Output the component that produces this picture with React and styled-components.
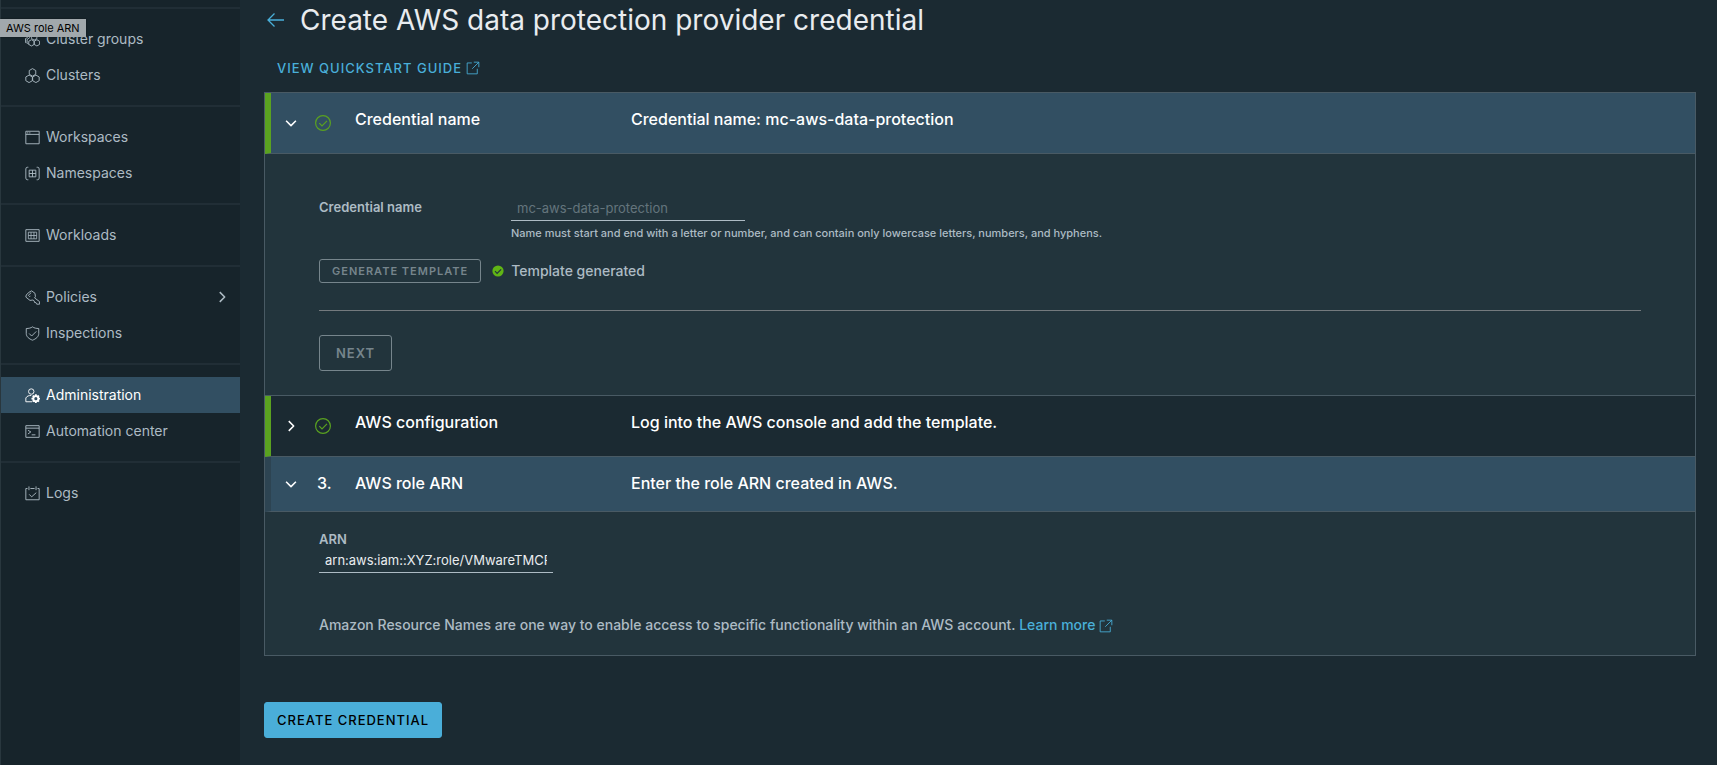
import React from 'react';
import styled, { createGlobalStyle } from 'styled-components';

const GlobalStyle = createGlobalStyle`
  *, *::before, *::after { box-sizing: border-box; }
  body {
    margin: 0;
    background: #1b2a32;
    color: #adbbc4;
    font: 400 14px/24px Inter, "Open Sans", sans-serif;
  }
  h1, h2, p { margin: 0; }
  a { color: #49afd9; text-decoration: none; }
  button, input { font-family: inherit; }
`;

const Shell = styled.div`
  position: relative;
  display: flex;
  min-height: 100vh;
`;

const DragLabel = styled.div`
  position: absolute;
  top: 19px;
  left: 0;
  padding: 0 6px;
  background: #a1a8ac;
  color: #000;
  font-size: 11px;
  line-height: 18px;
  box-shadow: 0 0 2px rgba(0, 0, 0, 0.4);
`;

const Sidebar = styled.nav`
  flex: 0 0 240px;
  padding-top: 7px;
  background: #17242b;
  border-left: 1px solid #29373e;
`;

const NavGroup = styled.ul`
  margin: 0;
  padding: 12px 0;
  list-style: none;
  border-top: 2px solid #212e36;
`;

const NavLink = styled.a`
  display: flex;
  align-items: center;
  gap: 6px;
  height: 36px;
  padding: 0 10px 0 24px;
  color: ${(p) => (p.$active ? '#fff' : '#adbbc4')};
  background: ${(p) => (p.$active ? '#324f62' : 'transparent')};
`;

const NavText = styled.span`
  flex: 1;
`;

const Main = styled.main`
  flex: 1;
  min-width: 0;
  padding: 4px 21px 27px 24px;
`;

const TitleRow = styled.header`
  display: flex;
  align-items: center;
  gap: 16px;
  padding-left: 3px;
`;

const BackLink = styled.a`
  display: flex;
`;

const Title = styled.h1`
  color: #e9ecef;
  font-size: 28px;
  font-weight: 400;
  line-height: 32px;
`;

const GuideLink = styled.a`
  display: flex;
  align-items: center;
  gap: 4px;
  width: fit-content;
  margin: 20px 0 12px;
  padding-left: 13px;
  font-size: 13px;
  font-weight: 500;
  letter-spacing: 1px;
`;

const Accordion = styled.div`
  border: 1px solid #495a64;
  background: #22343c;
`;

const StepHeader = styled.button`
  display: grid;
  grid-template-columns: 32px 40px 276px 1fr;
  align-items: center;
  width: 100%;
  height: ${(p) => (p.$done ? 61 : 55)}px;
  padding: 0 0 0 12px;
  border: 0;
  border-left: 6px solid ${(p) => (p.$done ? '#5aa220' : '#2d4452')};
  border-bottom: 1px solid #495a64;
  background: ${(p) => (p.$open ? '#324f62' : '#1b2a32')};
  color: #fff;
  font-size: 16px;
  font-weight: 500;
  line-height: 24px;
  text-align: left;
`;

const StepText = styled.span`
  padding-bottom: ${(p) => (p.$done ? 8 : 2)}px;
`;

const StepMark = styled.span`
  display: flex;
`;

const StepNumber = styled.span`
  padding: 0 0 2px 2px;
`;

const StepPanel = styled.section`
  padding: ${(p) => p.$top}px 54px ${(p) => p.$bottom}px;
  border-bottom: ${(p) => (p.$last ? 0 : 1)}px solid #495a64;
`;

const FieldRow = styled.div`
  display: grid;
  grid-template-columns: 192px 1fr;
`;

const FieldLabel = styled.label`
  display: block;
  font-size: 13px;
  font-weight: 600;
  line-height: 20px;
`;

const TextInput = styled.input`
  display: block;
  width: 234px;
  height: 24px;
  padding: 0 6px 2px;
  border: 0;
  border-bottom: 1px solid #adbbc4;
  border-radius: 0;
  outline: 0;
  background: transparent;
  color: #e9ecef;
  font-size: 13px;
  &:disabled { color: #64747c; }
`;

const Helper = styled.p`
  margin-top: 4px;
  font-size: 11px;
  font-weight: 500;
  line-height: 16px;
`;

const TemplateRow = styled.div`
  display: flex;
  align-items: center;
  margin: 18px 0 27px;
`;

const TemplateStatus = styled.p`
  display: flex;
  align-items: center;
  gap: 7px;
  margin-left: 11px;
  font-weight: 500;
`;

const Button = styled.button`
  display: block;
  height: ${(p) => (p.$small ? 24 : 36)}px;
  padding: 0 ${(p) => (p.$wide ? 16 : 12)}px;
  border: 1px solid ${(p) => (p.$primary ? '#4aaed9' : '#76858c')};
  border-radius: 3px;
  background: ${(p) => (p.$primary ? '#4aaed9' : 'transparent')};
  color: ${(p) => (p.$primary ? '#000' : '#76858c')};
  font-size: ${(p) => (p.$small ? 11 : 13)}px;
  font-weight: ${(p) => (p.$primary ? 500 : 600)};
  letter-spacing: 1px;
`;

const Divider = styled.hr`
  height: 1px;
  margin: 0 0 24px;
  border: 0;
  background: #747a7e;
`;

const ArnNote = styled.p`
  margin-top: 40px;
  font-weight: 500;
`;

const LearnLink = styled.a`
  & > svg { vertical-align: -3px; }
`;

const Footer = styled.footer`
  margin-top: 46px;
`;

/* Line icons on a 36-unit grid */
const Icon = ({ size = 16, stroke = 2.2, children }) => (
  <svg width={size} height={size} viewBox="0 0 36 36" fill="none" stroke="currentColor"
    strokeWidth={stroke} strokeLinejoin="round" aria-hidden="true">
    {children}
  </svg>
);

/* Hexagon with a point at the top */
const hex = (x, y, r) =>
  `M${x} ${y - r}l${r * 0.87} ${r * 0.5}v${r}l${-r * 0.87} ${r * 0.5}l${-r * 0.87} ${-r * 0.5}v${-r}z`;

const icons = {
  groups: (
    <>
      <path d={hex(22, 12, 7.5)} />
      <path d={hex(15.5, 26, 7.5)} />
      <path d={hex(28.5, 26, 7.5)} />
      <path d="M18 2l-7 4v8l-6 4v8l4 4M12 2L6 5v8l-5 3v8l2 3" />
    </>
  ),
  clusters: (
    <>
      <path d={hex(18, 10.5, 9)} />
      <path d={hex(9.8, 26, 9)} />
      <path d={hex(26.2, 26, 9)} />
    </>
  ),
  workspaces: (
    <>
      <path d="M2 3h32v30H2zM2 10.500h32" />
      <path d="M5 7h3M10 7h3" />
    </>
  ),
  namespaces: (
    <>
      <path d="M8 3H6Q2 3 2 7v22q0 4 4 4h2M28 3h2q4 0 4 4v22q0 4-4 4h-2" />
      <path d="M10 10h16v16H10zM18 10v16M10 18h16" />
    </>
  ),
  workloads: (
    <>
      <path d="M2 4h32v28H2z" />
      <path d="M8 10h20v16H8zM14.500 10v16M21.500 10v16M8 18h20" strokeWidth="2" />
    </>
  ),
  policies: (
    <>
      <path d="M10 5l6-3 8 6 1 8-2 3 12 9v6h-7l-2-4h-3l-1-4-3-2-7 1-10-8 1-5z" />
      <path d="M7 14l8-8M10 17l3-3" />
    </>
  ),
  inspections: (
    <>
      <path d="M18 2c4 3 9 4 15 4v12c0 8-7 13-15 16C10 31 3 26 3 18V6c6 0 11-1 15-4z" />
      <path d="M10 18l6 6 11-11" />
    </>
  ),
  administration: (
    <>
      <circle cx="15" cy="8.500" r="6.500" />
      <path d="M17 33H2v-9c3-5 7-6 13-6" />
      <path d="M26 15v5M26 31v5M15.500 25.500h5M31.500 25.500h5M18.600 18.100l3.500 3.500M29.900 29.400l3.500 3.500M33.400 18.100l-3.500 3.500M22.100 29.400l-3.500 3.500" strokeWidth="4.500" />
      <circle cx="26" cy="25.500" r="6" strokeWidth="4.500" />
    </>
  ),
  automation: (
    <>
      <path d="M2 4h32v28H2zM2 10h32" />
      <path d="M7 15l7 4-7 5M16 26h9" />
    </>
  ),
  logs: (
    <>
      <path d="M6 6H2v27h32V6h-4M13 6h10M9.500 1v9M26.500 1v9" />
      <path d="M10 20l6 6 11-10" />
    </>
  ),
};

const ExternalIcon = () => (
  <Icon size={14}>
    <path d="M15 5H3v28h26V20M20 3h13v13M33 3L16 20" />
  </Icon>
);

const Chevron = ({ down }) => (
  <Icon stroke={3.5}>
    <path d={down ? 'M7 13l11 11 11-11' : 'M13 7l11 11-11 11'} />
  </Icon>
);

const DoneIcon = () => (
  <svg width="16" height="16" viewBox="0 0 16 16" fill="none" stroke="#5aa220" strokeWidth="1.2" aria-hidden="true">
    <circle cx="8" cy="8" r="7.400" />
    <path d="M4.300 8.200l2.700 2.700 5-5" />
  </svg>
);

const navGroups = [
  [['groups', 'Cluster groups'], ['clusters', 'Clusters']],
  [['workspaces', 'Workspaces'], ['namespaces', 'Namespaces']],
  [['workloads', 'Workloads']],
  [['policies', 'Policies', true], ['inspections', 'Inspections']],
  [['administration', 'Administration'], ['automation', 'Automation center']],
  [['logs', 'Logs']],
];

const Step = ({ open = false, done, number, title, description }) => (
  <StepHeader type="button" $open={open} $done={done} aria-expanded={open}>
    <StepMark><Chevron down={open} /></StepMark>
    {done ? <StepMark><DoneIcon /></StepMark> : <StepNumber>{number}</StepNumber>}
    <StepText $done={done}>{title}</StepText>
    <StepText $done={done}>{description}</StepText>
  </StepHeader>
);

export default function App() {
  return (
    <>
      <GlobalStyle />
      <Shell>
        <Sidebar aria-label="Primary">
          {navGroups.map((group) => (
            <NavGroup key={group[0][0]}>
              {group.map(([icon, label, expandable]) => (
                <li key={icon}>
                  <NavLink href="#" $active={icon === 'administration'}>
                    <Icon size={15}>{icons[icon]}</Icon>
                    <NavText>{label}</NavText>
                    {expandable && <Chevron />}
                  </NavLink>
                </li>
              ))}
            </NavGroup>
          ))}
        </Sidebar>
        <Main>
          <TitleRow>
            <BackLink href="#" aria-label="Back">
              <svg width="17" height="16" viewBox="0 0 17 16" fill="none" stroke="currentColor" strokeWidth="1.3" aria-hidden="true">
                <path d="M17 8H1M7.500 1.500L1 8l6.500 6.500" />
              </svg>
            </BackLink>
            <Title>Create AWS data protection provider credential</Title>
          </TitleRow>
          <GuideLink href="#">VIEW QUICKSTART GUIDE <ExternalIcon /></GuideLink>
          <Accordion>
            <Step open done title="Credential name" description="Credential name: mc-aws-data-protection" />
            <StepPanel $top={43} $bottom={24}>
              <FieldRow>
                <FieldLabel htmlFor="credential-name">Credential name</FieldLabel>
                <div>
                  <TextInput id="credential-name" defaultValue="mc-aws-data-protection" disabled />
                  <Helper>Name must start and end with a letter or number, and can contain only lowercase letters, numbers, and hyphens.</Helper>
                </div>
              </FieldRow>
              <TemplateRow>
                <Button type="button" $small disabled>GENERATE TEMPLATE</Button>
                <TemplateStatus>
                  <svg width="12" height="12" viewBox="0 0 12 12" fill="none" aria-hidden="true">
                    <circle cx="6" cy="6" r="5.600" fill="#60b515" />
                    <path d="M3 6.200l2.100 2.100 4-4" stroke="#22343c" strokeWidth="1.2" />
                  </svg>
                  Template generated
                </TemplateStatus>
              </TemplateRow>
              <Divider />
              <Button type="button" $wide disabled>NEXT</Button>
            </StepPanel>
            <Step done title="AWS configuration" description="Log into the AWS console and add the template." />
            <Step open number="3." title="AWS role ARN" description="Enter the role ARN created in AWS." />
            <StepPanel $top={17} $bottom={18} $last>
              <FieldLabel htmlFor="arn">ARN</FieldLabel>
              <TextInput id="arn" defaultValue="arn:aws:iam::XYZ:role/VMwareTMCProvider" />
              <ArnNote>
                Amazon Resource Names are one way to enable access to specific functionality within an AWS account.{' '}
                <LearnLink href="#">Learn more <ExternalIcon /></LearnLink>
              </ArnNote>
            </StepPanel>
          </Accordion>
          <Footer>
            <Button type="button" $primary>CREATE CREDENTIAL</Button>
          </Footer>
        </Main>
        <DragLabel>AWS role ARN</DragLabel>
      </Shell>
    </>
  );
}
